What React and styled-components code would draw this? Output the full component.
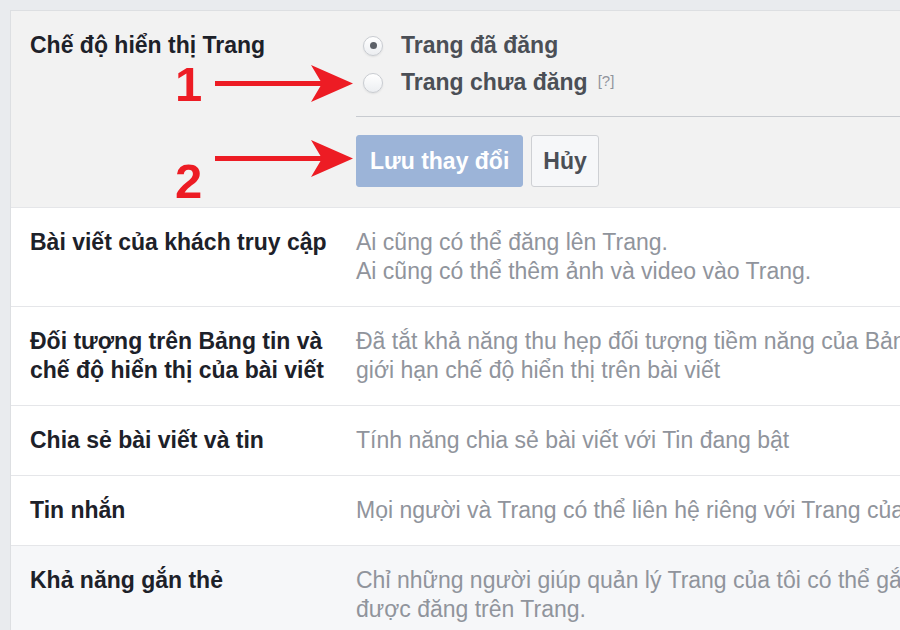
import React from "react";
import styled, { createGlobalStyle } from "styled-components";

const GlobalStyle = createGlobalStyle`
	html, body {
		margin: 0;
		padding: 0;
		background: #e9ebee;
		overflow: hidden;
	}
	body {
		font-family: "Liberation Sans", Arial, Helvetica, sans-serif;
	}
`;

const Page = styled.div`
	position: relative;
	width: 900px;
	height: 630px;
	padding: 10px 0 0 10px;
	box-sizing: border-box;
	overflow: hidden;
`;

const Panel = styled.div`
	width: 1100px;
	background: #fff;
	border: 1px solid #dddfe2;
	border-right: none;
`;

const Row = styled.div`
	display: grid;
	grid-template-columns: 326px 1fr;
	padding: 20px 0 20px 19px;
	background: ${(p) => p.$bg || "#fff"};
	border-bottom: 1px solid #e5e6e9;
	font-size: 23px;
	line-height: 29px;
`;

const Label = styled.div`
	color: #1d2129;
	font-weight: bold;
	padding-right: 12px;
`;

const Description = styled.div`
	color: #90949c;
	white-space: nowrap;
`;

const Editor = styled.div`
	display: flex;
	flex-direction: column;
`;

const RadioList = styled.div`
	display: flex;
	flex-direction: column;
	gap: 8px;
`;

const RadioItem = styled.label`
	display: flex;
	align-items: center;
	color: #4b4f56;
	font-weight: bold;
	white-space: nowrap;
`;

const RadioDot = styled.span`
	width: 20px;
	height: 20px;
	margin: 0 18px 0 7px;
	border-radius: 50%;
	border: 1px solid #c9ccd1;
	box-sizing: border-box;
	background: linear-gradient(#ffffff, #eceef1);
	box-shadow: 0 1px 2px rgba(0, 0, 0, 0.08);
	display: flex;
	align-items: center;
	justify-content: center;
	&::after {
		content: "";
		width: 7px;
		height: 7px;
		border-radius: 50%;
		background: ${(p) => (p.$checked ? "#5d6168" : "transparent")};
	}
`;

const Hint = styled.span`
	color: #90949c;
	font-weight: normal;
	font-size: 15px;
	margin-left: 10px;
	position: relative;
	top: -2px;
`;

const Divider = styled.div`
	height: 1px;
	background: #c8cbd0;
	margin-top: 19px;
`;

const Actions = styled.div`
	display: flex;
	gap: 8px;
	margin-top: 18px;
`;

const Button = styled.button`
	height: 52px;
	padding: 0 ${(p) => (p.$primary ? "13px" : "11px")};
	border-radius: 3px;
	border: 1px solid ${(p) => (p.$primary ? "#9cb4d8" : "#ced0d4")};
	background: ${(p) => (p.$primary ? "#9cb4d8" : "#f6f7f9")};
	color: ${(p) => (p.$primary ? "#fff" : "#4b4f56")};
	font-family: inherit;
	font-size: 23px;
	font-weight: bold;
	cursor: pointer;
`;

const Marker = styled.span`
	position: absolute;
	left: ${(p) => p.$x}px;
	top: ${(p) => p.$y}px;
	color: #ed1c24;
	font-size: 49px;
	font-weight: bold;
	line-height: 1;
`;

const ArrowSvg = styled.svg`
	position: absolute;
	left: 213px;
	top: ${(p) => p.$y}px;
`;

function Arrow({ y }) {
	// shaft plus a notched head, pointing right
	return (
		<ArrowSvg $y={y} width="142" height="40" viewBox="0 0 142 40">
			<rect x="2" y="17" width="110" height="5" fill="#ed1c24" />
			<path d="M140 19.5 L98 1 L109 19.5 L98 38 Z" fill="#ed1c24" />
		</ArrowSvg>
	);
}

const rows = [
	{
		label: "Bài viết của khách truy cập",
		lines: ["Ai cũng có thể đăng lên Trang.", "Ai cũng có thể thêm ảnh và video vào Trang."],
	},
	{
		label: "Đối tượng trên Bảng tin và chế độ hiển thị của bài viết",
		lines: [
			"Đã tắt khả năng thu hẹp đối tượng tiềm năng của Bảng tin và",
			"giới hạn chế độ hiển thị trên bài viết",
		],
	},
	{ label: "Chia sẻ bài viết và tin", lines: ["Tính năng chia sẻ bài viết với Tin đang bật"] },
	{ label: "Tin nhắn", lines: ["Mọi người và Trang có thể liên hệ riêng với Trang của tôi."] },
	{
		label: "Khả năng gắn thẻ",
		lines: [
			"Chỉ những người giúp quản lý Trang của tôi có thể gắn thẻ trong ảnh",
			"được đăng trên Trang.",
		],
		bg: "#f6f7f9",
	},
];

export default function App() {
	return (
		<>
			<GlobalStyle />
			<Page>
				<Panel>
					<Row $bg="#f2f2f2">
						<Label>Chế độ hiển thị Trang</Label>
						<Editor>
							<RadioList>
								<RadioItem>
									<RadioDot $checked />
									Trang đã đăng
								</RadioItem>
								<RadioItem>
									<RadioDot />
									Trang chưa đăng
									<Hint>[?]</Hint>
								</RadioItem>
							</RadioList>
							<Divider />
							<Actions>
								<Button $primary>Lưu thay đổi</Button>
								<Button>Hủy</Button>
							</Actions>
						</Editor>
					</Row>
					{rows.map((r) => (
						<Row key={r.label} $bg={r.bg}>
							<Label>{r.label}</Label>
							<Description>
								{r.lines.map((l) => (
									<div key={l}>{l}</div>
								))}
							</Description>
						</Row>
					))}
				</Panel>

				<Marker $x={175} $y={60}>1</Marker>
				<Arrow y={64} />
				<Marker $x={175} $y={157}>2</Marker>
				<Arrow y={139} />
			</Page>
		</>
	);
}
